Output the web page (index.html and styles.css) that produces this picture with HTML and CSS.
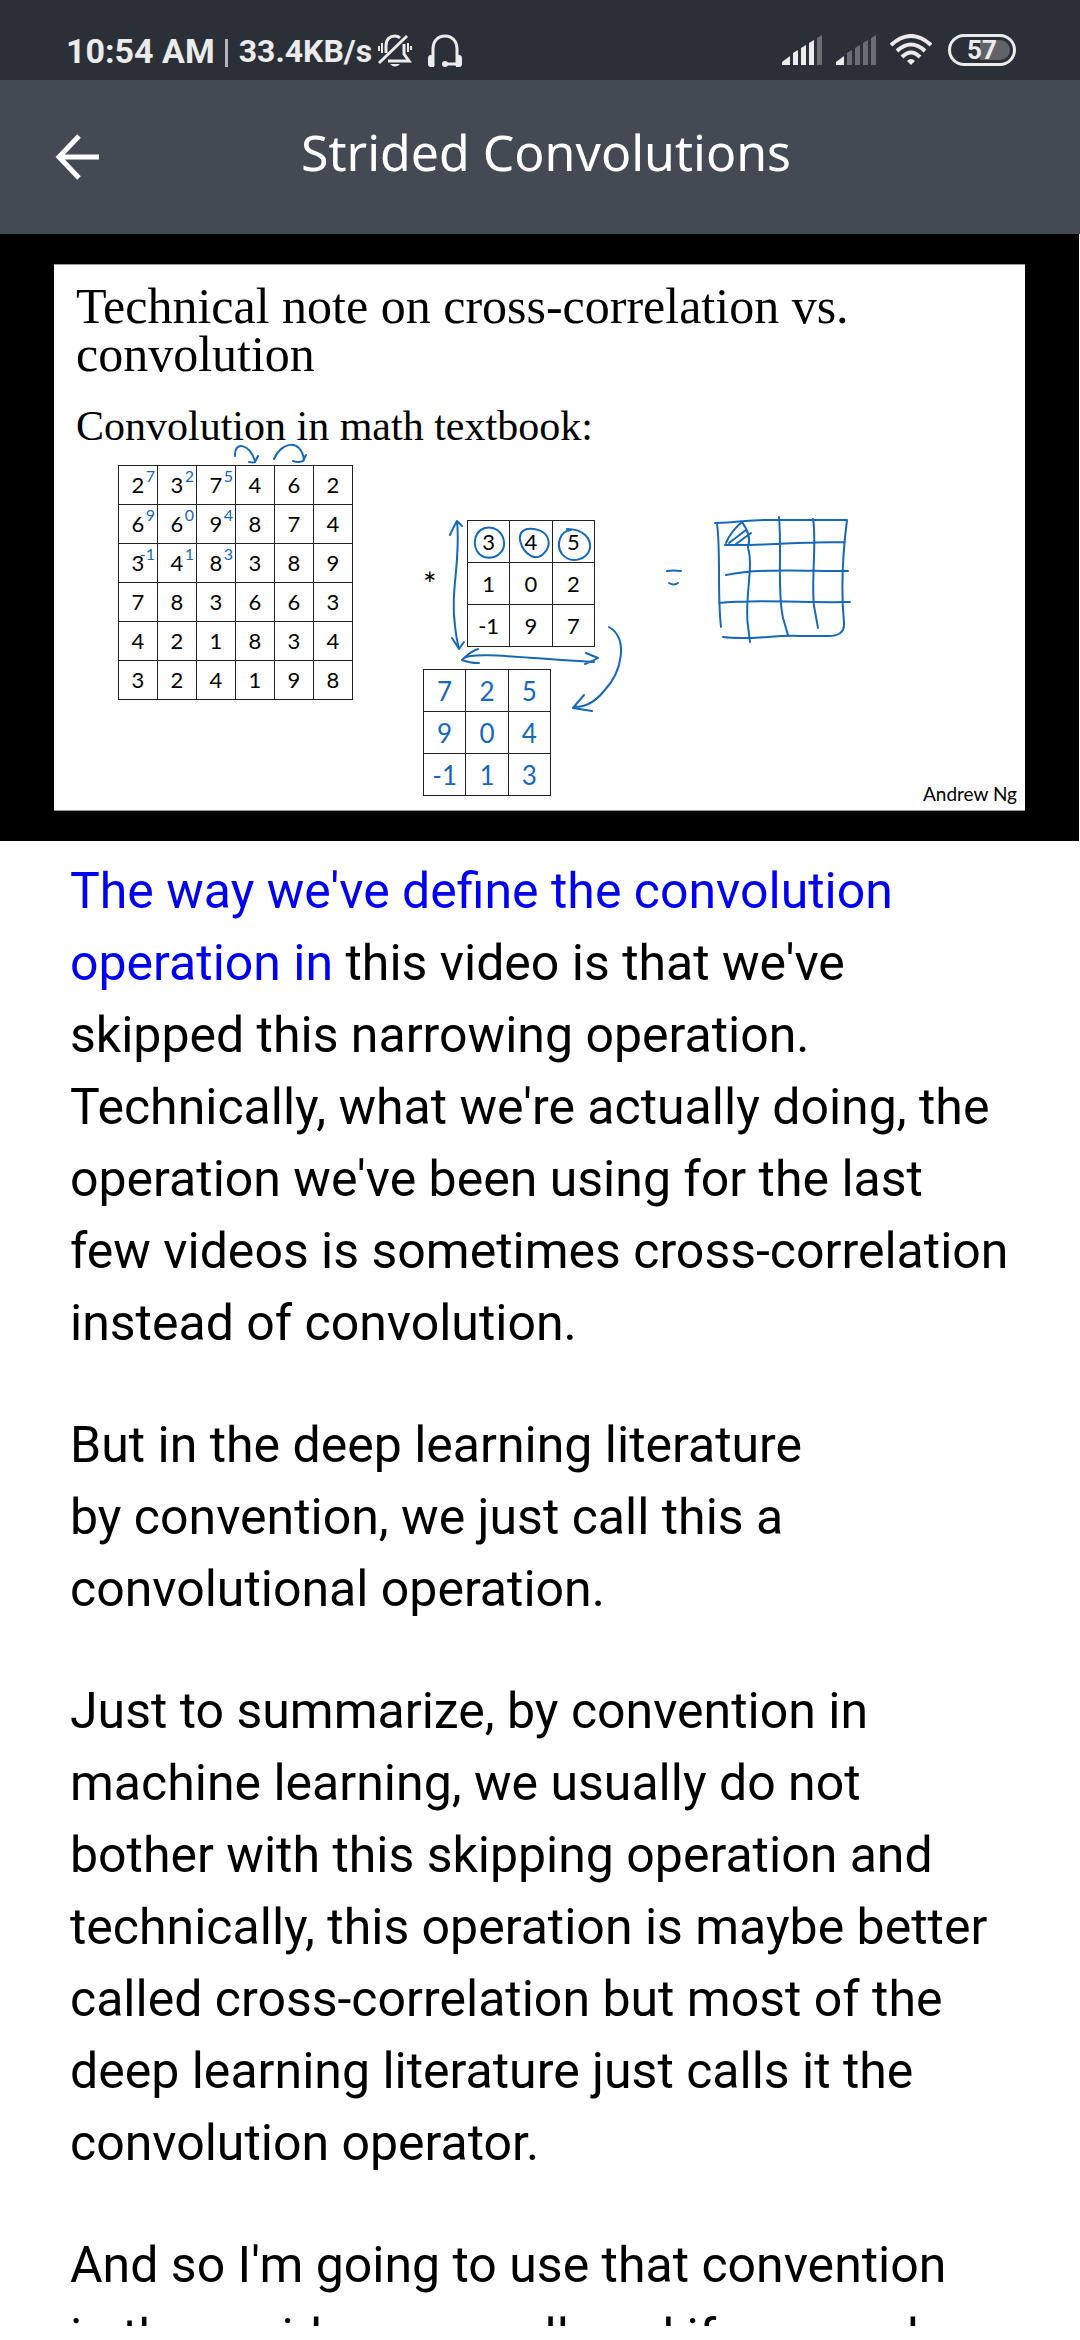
FILE: index.html
```html
<!DOCTYPE html>
<html lang="en">
<head>
<meta charset="utf-8">
<meta name="viewport" content="width=device-width, initial-scale=1">
<title>Strided Convolutions</title>
<link rel="stylesheet" href="styles.css">
</head>
<body>
<div class="screen">
  <div class="status">
    <div class="status-left">
      <span class="clock">10:54 AM</span>
      <span class="bar"></span>
      <span class="speed">33.4KB/s</span>
      <svg class="icon-bell" width="34" height="34" viewBox="0 0 34 34" fill="none" stroke="#ebebeb" stroke-width="3" aria-hidden="true">
        <path d="M8 19V12C8 5 12 2 17 2Q20 2 22 4M26 10V20L31 27H10"/>
        <path d="M1 29L29 2"/>
        <path d="M4 9v10M1 12v5M30 9v9M33 12v4" stroke-width="2"/>
        <path d="M12 30h10q-5 5-10 0z" fill="#ebebeb" stroke="none"/>
      </svg>
      <svg class="icon-head" width="36" height="34" viewBox="0 0 36 34" fill="none" stroke="#ebebeb" stroke-width="3" aria-hidden="true">
        <path d="M6 32V15C6 7 11 2 18 2S30 7 30 15V32M18 30h12"/>
        <path d="M1 24q0-3 3-3h3v12H4q-3 0-3-3zM35 24q0-3-3-3h-3v12h3q3 0 3-3z" fill="#ebebeb" stroke="none"/>
        <circle cx="18" cy="30" r="3" fill="#ebebeb" stroke="none"/>
      </svg>
    </div>
    <div class="status-right">
      <svg width="40" height="30" viewBox="0 0 40 30" fill="#ebebeb" aria-hidden="true"><path d="M0 27l8-6v9H0zM11 18l5-3v15h-5zM19 13l5-3v20h-5zM27 8l5-3v25h-5z"/><path fill="#6b6d72" d="M35 3l5-3v30h-5z"/></svg>
      <svg width="40" height="30" viewBox="0 0 40 30" fill="#6b6d72" aria-hidden="true"><path fill="#ebebeb" d="M0 27l8-6v9H0z"/><path d="M11 18l5-3v15h-5zM19 13l5-3v20h-5zM27 8l5-3v25h-5zM35 3l5-3v30h-5z"/></svg>
      <svg width="42" height="32" viewBox="0 0 42 32" fill="none" stroke="#ebebeb" stroke-width="4" aria-hidden="true"><path d="M1 11Q21-7 41 11M7 17Q21 4 35 17M12 23Q21 14 30 23"/><path d="M17 27q4-4 8 0l-4 4z" fill="#ebebeb" stroke="none"/></svg>
      <span class="battery"><span class="battery-text">57</span></span>
    </div>
  </div>

  <header class="topbar">
    <button class="back" type="button" aria-label="Back">
      <svg width="44" height="46" viewBox="0 0 44 46" fill="none" stroke="#fff" stroke-width="5" aria-hidden="true"><path d="M24 2L4 23L24 44M3 23H44"/></svg>
    </button>
    <h1 class="heading">Strided Convolutions</h1>
  </header>

  <section class="video" aria-label="Lecture slide">
    <div class="slide">
      <h2 class="slide-title">Technical note on cross-correlation vs.<br>convolution</h2>
      <p class="slide-sub">Convolution in math textbook:</p>
      <div class="slide-body">
        <table class="matrix image">
          <tr><td>2<sup>7</sup></td><td>3<sup>2</sup></td><td>7<sup>5</sup></td><td>4</td><td>6</td><td>2</td></tr>
          <tr><td>6<sup>9</sup></td><td>6<sup>0</sup></td><td>9<sup>4</sup></td><td>8</td><td>7</td><td>4</td></tr>
          <tr><td>3<sup>-1</sup></td><td>4<sup>1</sup></td><td>8<sup>3</sup></td><td>3</td><td>8</td><td>9</td></tr>
          <tr><td>7</td><td>8</td><td>3</td><td>6</td><td>6</td><td>3</td></tr>
          <tr><td>4</td><td>2</td><td>1</td><td>8</td><td>3</td><td>4</td></tr>
          <tr><td>3</td><td>2</td><td>4</td><td>1</td><td>9</td><td>8</td></tr>
        </table>
        <div class="kernels">
          <div class="kernel-row">
            <span class="star">*</span>
            <table class="matrix kernel">
              <tr><td>3</td><td>4</td><td>5</td></tr>
              <tr><td>1</td><td>0</td><td>2</td></tr>
              <tr><td>-1</td><td>9</td><td>7</td></tr>
            </table>
          </div>
          <table class="matrix kernel written">
            <tr><td>7</td><td>2</td><td>5</td></tr>
            <tr><td>9</td><td>0</td><td>4</td></tr>
            <tr><td>-1</td><td>1</td><td>3</td></tr>
          </table>
        </div>
        <span class="author">Andrew Ng</span>
      </div>
      <svg class="ink" width="971" height="546" viewBox="53 264 971 546" aria-hidden="true">
        <!-- shift arrows over the image matrix -->
        <path d="M234 455C233 440 248 442 254 460M248 461q5 1 6 0l3-6M273 458C280 441 300 437 303 459M292 460q5 2 10 0l3-6"/>
        <!-- extent arrows round the kernel -->
        <path d="M456 520C460 560 449 590 454 625Q455 636 458 648M449 534Q453 525 456 520L461 525M451 637L458 648L463 641"/>
        <path d="M462 658C470 650 520 657 593 661M477 648Q470 650 461 659Q468 662 478 662M585 652L597 657Q592 660 584 663"/>
        <!-- circled values -->
        <path d="M484 527C470 531 471 552 483 556C496 559 504 550 503 541C502 531 494 525 484 527M526 528C513 532 520 549 530 555C541 560 550 546 547 538C545 530 535 527 526 528M570 529C558 530 555 545 561 553C569 563 586 560 589 547C590 537 582 528 566 528"/>
        <!-- arrow down to the flipped kernel -->
        <path d="M608 626C627 637 622 670 603 690Q590 706 574 706M583 694L572 707L591 710"/>
        <!-- equals mark -->
        <path d="M666 570Q672 569 680 570M668 582Q673 585 677 582"/>
        <!-- output grid -->
        <path d="M714 522C740 522 745 518 770 519L846 519M716 522C720 555 716 590 720 626M724 544C760 545 790 541 844 541M725 574C760 567 800 570 847 570M718 602C750 598 790 602 849 601M722 636C750 640 775 633 800 635L825 635Q844 636 843 622C840 590 842 550 846 519M778 516C781 550 776 590 782 617L787 634M812 518C816 540 810 580 813 605L817 627M747 547C753 565 743 600 747 625L749 641"/>
        <!-- hatched first output cell -->
        <path d="M725 542Q730 530 741 521Q751 535 747 546M728 542L745 529M735 543L750 532"/>
      </svg>
    </div>
  </section>

  <main class="transcript">
    <p><a class="spoken" href="#now">The way we've define the convolution operation in</a> this video is that we've skipped this narrowing operation. Technically, what we're actually doing, the operation we've been using for the last few videos is sometimes cross-correlation instead of convolution.</p>
    <p>But in the deep learning literature<br>by convention, we just call this a convolutional operation.</p>
    <p>Just to summarize, by convention in machine learning, we usually do not bother with this skipping operation and technically, this operation is maybe better called cross-correlation but most of the deep learning literature just calls it the convolution operator.</p>
    <p>And so I'm going to use that convention<br>in these videos as well, and if you read</p>
  </main>
</div>
</body>
</html>
```
FILE: styles.css
```css
* { box-sizing: border-box; }

body { margin: 0; background: #fff; color: #000; font-family: Roboto, sans-serif; }

h1, h2, p { margin: 0; font-weight: 400; }

.screen { display: flex; flex-direction: column; height: 100vh; padding-bottom: 14px; overflow: hidden; }

.status {
  flex: none;
  display: flex;
  justify-content: space-between;
  align-items: flex-end;
  height: 80px;
  padding: 0 64px 12px 66px;
  background: #2b2f37;
  color: #ebebeb;
}
.status-left, .status-right { display: flex; align-items: center; }
.status-left { height: 34px; line-height: 34px; font-weight: 700; white-space: nowrap; }
.status-right { height: 34px; gap: 14px; padding-bottom: 2px; }
.clock { font-size: 34px; }
.bar { width: 3px; height: 28px; margin: 4px 11px 0 10px; background: #b4b5b8; }
.speed { font-size: 32px; }
.icon-bell { margin-left: 6px; }
.icon-head { margin-left: 15px; }
.battery {
  display: flex;
  width: 68px;
  height: 32px;
  margin-left: 2px;
  padding: 3px;
  border: 3px solid #ebebeb;
  border-radius: 16px;
}
.battery-text {
  flex: 1;
  border-radius: 10px;
  background: linear-gradient(to right, transparent 46%, #606368 46%);
  font-size: 26px;
  font-weight: 700;
  line-height: 20px;
  text-align: center;
}

.topbar {
  flex: none;
  display: grid;
  grid-template-columns: 44px 1fr 44px;
  align-items: center;
  height: 154px;
  padding: 0 43px 0 55px;
  background: #444a54;
  color: #fff;
}
.back { padding: 0; border: 0; background: none; line-height: 0; }
.heading { padding-bottom: 10px; font: 400 50px/68px "Noto Sans", sans-serif; text-align: center; }

.video { flex: none; margin-right: 1px; padding: 30px 54px; background: #000; }

.slide {
  position: relative;
  padding: 17px 8px 0 22px;
  border: solid #999;
  border-width: 1px 0;
  background: #fff;
}
.slide-title { font: 50px/48px "Liberation Serif", serif; }
.slide-sub { margin-top: 24px; font: 42px/48px "Liberation Serif", serif; }
.slide-body { display: flex; align-items: flex-start; padding: 15px 0 0 42px; font-family: Lato, sans-serif; }

.matrix { border-collapse: collapse; table-layout: fixed; font-size: 22px; line-height: 24px; text-align: center; }
.matrix td { position: relative; padding: 0; border: 1px solid #222; }
.image { width: 235px; }
.image td { height: 39px; }
.kernel { width: 128px; }
.kernel td { height: 42px; }
.matrix sup {
  position: absolute;
  top: 1px;
  right: 2px;
  color: #1768b8;
  font-size: 16px;
  line-height: 18px;
}
.written { margin-top: 22px; color: #1768b8; font-size: 26px; }

.kernels { margin: 55px 0 0 70px; padding-bottom: 14px; }
.kernel-row { display: flex; }
.star { width: 44px; padding-top: 48px; font-size: 32px; line-height: 32px; }
.author { align-self: flex-end; margin: 0 0 4px auto; font-size: 19px; line-height: 24px; }

.ink { position: absolute; top: 0; left: 0; fill: none; stroke: #1768b8; stroke-width: 2; stroke-linecap: round; stroke-linejoin: round; }

.transcript { flex: 1; min-height: 0; padding: 14px 66px 0 70px; overflow: hidden; font-size: 50px; line-height: 72px; }
.transcript p + p { margin-top: 50px; }
.spoken { color: #0000f0; text-decoration: none; }
```
